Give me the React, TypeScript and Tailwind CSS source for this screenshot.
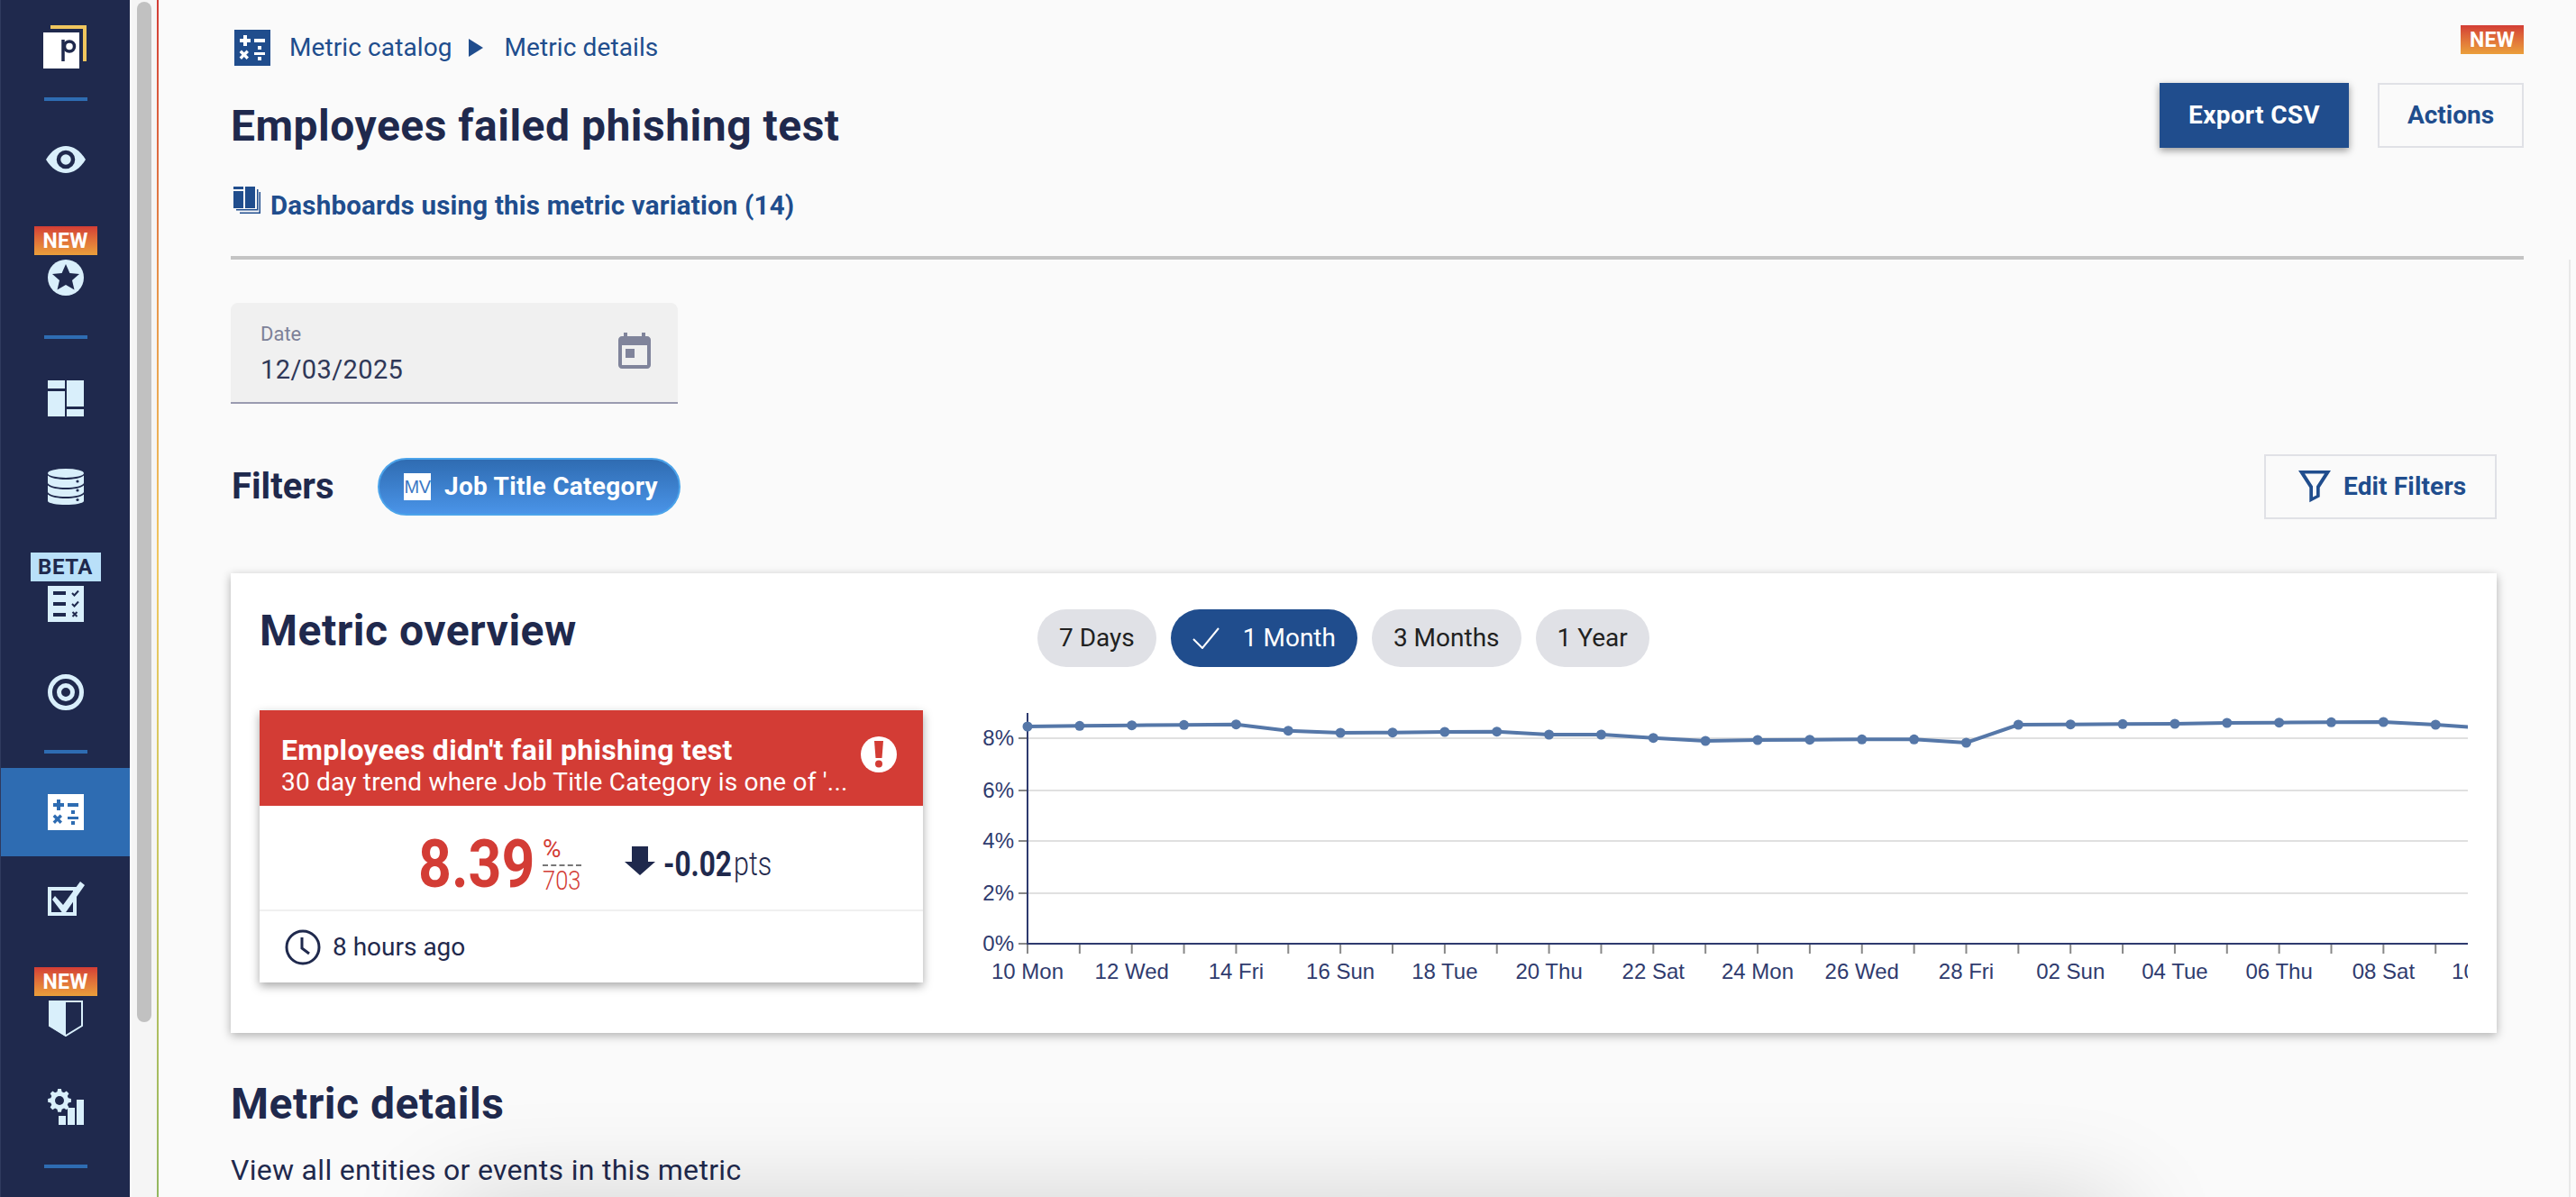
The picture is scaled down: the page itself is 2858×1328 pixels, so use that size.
const points = [
  806, 805.3, 804.7, 804.3, 803.7, 810.7, 813, 812.7, 812, 811.7, 815, 815, 818.7, 822, 821, 820.7, 820.3, 820.3, 824, 804,
  803.7, 803.3, 803, 802, 801.7, 801.3, 801, 804, 808,
];
const xLabels = [
  '10 Mon', '12 Wed', '14 Fri', '16 Sun', '18 Tue', '20 Thu', '22 Sat', '24 Mon', '26 Wed', '28 Fri', '02 Sun', '04 Tue',
  '06 Thu', '08 Sat', '10 Mon',
];
const yLabels = [
  { label: '8%', y: 819 },
  { label: '6%', y: 877 },
  { label: '4%', y: 933 },
  { label: '2%', y: 991 },
  { label: '0%', y: 1047 },
];

const light = '#d9effb';
const navy = '#1f294d';

function SideDivider({ className = '' }: { className?: string }) {
  return <div className={`mx-auto h-1 w-12 shrink-0 bg-[#2e6cb2] ${className}`} />;
}

function NewBadge({ className = '' }: { className?: string }) {
  return (
    <div
      className={`flex h-8 w-[70px] shrink-0 items-center justify-center bg-gradient-to-b from-[#d33c35] to-[#ea9f3b] text-[23px] leading-none font-bold tracking-[0.3px] text-white ${className}`}
    >
      NEW
    </div>
  );
}

function CalcIcon({ bg, fg }: { bg: string; fg: string }) {
  return (
    <svg width="40" height="40" viewBox="0 0 40 40" className="shrink-0">
      <rect width="40" height="40" fill={bg} />
      <g fill={fg}>
        <rect x="6" y="10" width="12" height="4" />
        <rect x="10" y="6" width="4" height="12" />
        <rect x="22" y="10" width="12" height="4" />
        <path d="M8 22.5l2.8 2.8 2.800-2.800 2.400 2.400-2.800 2.800 2.800 2.800-2.400 2.400-2.800-2.800-2.800 2.800-2.400-2.400 2.800-2.800-2.800-2.800z" />
        <rect x="22" y="25" width="12" height="3" />
        <rect x="26" y="18" width="4" height="4" />
        <rect x="26" y="30" width="4" height="4" />
      </g>
    </svg>
  );
}

function Sidebar() {
  return (
    <aside className="flex h-full w-[144px] shrink-0 flex-col items-center border-l border-[#2f3a5e] bg-[#1f294d]">
      <svg width="48" height="48" viewBox="0 0 48 48" className="mt-7 ml-[-1px] shrink-0">
        <path d="M8 0h40v40h-4V4H8z" fill="#f0c65e" />
        <rect x="0" y="8" width="40" height="40" fill="#fff" />
        <path d="M22 16v24" stroke={navy} strokeWidth="3.500" />
        <circle cx="29" cy="23.500" r="5.500" fill="none" stroke={navy} strokeWidth="3.500" />
      </svg>
      <SideDivider className="mt-8" />
      <svg width="44" height="30" viewBox="0 0 44 30" className="mt-[50px] shrink-0">
        <path d="M0 15C6 5 14 0 22 0s16 5 22 15c-6 10-14 15-22 15S6 25 0 15z" fill={light} />
        <circle cx="22" cy="15" r="8" fill="none" stroke={navy} strokeWidth="4.500" />
      </svg>
      <NewBadge className="mt-[59px]" />
      <svg width="40" height="40" viewBox="0 0 40 40" className="mt-[5px] shrink-0">
        <circle cx="20" cy="20" r="20" fill={light} />
        <path d="M20 5l4.400 10 10.600.9-8 7 2.500 10.600L20 27.900l-9.500 5.600L13 22.900l-8-7 10.600-.9z" fill={navy} />
      </svg>
      <SideDivider className="mt-11" />
      <svg width="40" height="40" viewBox="0 0 40 40" fill={light} className="mt-[46px] shrink-0">
        <rect x="0" y="0" width="19" height="9" />
        <rect x="0" y="12" width="19" height="28" />
        <rect x="21" y="0" width="19" height="29" />
        <rect x="21" y="32" width="19" height="8" />
      </svg>
      <svg width="40" height="40" viewBox="0 0 40 40" className="mt-[58px] shrink-0">
        <g fill={light}>
          <ellipse cx="20" cy="5" rx="20" ry="5" />
          <path d="M0 7.500c3 3 12 4.500 20 4.500s17-1.500 20-4.500V16c-1 3-10 5-20 5S1 19 0 16z" />
          <path d="M0 18.500c3 3 12 4.500 20 4.500s17-1.500 20-4.500V26c-1 3-10 5-20 5S1 29 0 26z" />
          <path d="M0 28.500c3 3 12 4.500 20 4.500s17-1.500 20-4.500V36c-1 2.500-10 4-20 4S1 38.500 0 36z" />
        </g>
        <g fill={navy}>
          <circle cx="33" cy="14" r="1.600" />
          <circle cx="33" cy="24" r="1.600" />
          <circle cx="33" cy="34.500" r="1.600" />
        </g>
      </svg>
      <div className="mt-[53px] flex h-8 w-[78px] shrink-0 items-center justify-center bg-[#b9e0f9] text-[24px] leading-none font-bold tracking-[0.5px] text-[#1f294d]">
        BETA
      </div>
      <svg width="40" height="40" viewBox="0 0 40 40" className="mt-[5px] shrink-0">
        <rect width="40" height="40" fill={light} />
        <g fill={navy}>
          <rect x="6" y="6" width="14" height="4" />
          <rect x="6" y="18" width="14" height="4" />
          <rect x="6" y="30" width="14" height="4" />
        </g>
        <g fill="none" stroke={navy} strokeWidth="2">
          <path d="M27 8l2.500 2.500 4.500-5" />
          <path d="M27 20l2.500 2.500 4.500-5" />
          <path d="M27.500 29l5 5m0-5l-5 5" />
        </g>
      </svg>
      <svg width="40" height="40" viewBox="0 0 40 40" fill="none" stroke={light} className="mt-[58px] shrink-0">
        <circle cx="20" cy="20" r="17.500" strokeWidth="5" />
        <circle cx="20" cy="20" r="7.500" strokeWidth="5" />
      </svg>
      <SideDivider className="mt-11" />
      <div className="mt-4 flex h-[98px] w-full shrink-0 items-center justify-center bg-[#2e6cb2]">
        <CalcIcon bg="#fff" fg="#2e6cb2" />
      </div>
      <svg width="42" height="40" viewBox="0 0 42 40" className="mt-[26px] ml-[3px] shrink-0">
        <rect x="2" y="10" width="28" height="28" fill="none" stroke={light} strokeWidth="4" />
        <path d="M8 18l9 10L36 2l5 4-23 33L5 22z" fill={light} />
      </svg>
      <NewBadge className="mt-[57px]" />
      <svg width="38" height="40" viewBox="0 0 38 40" className="mt-[5px] shrink-0">
        <path d="M1 1h36v27L19 39 1 28z" fill={navy} stroke={light} strokeWidth="2" />
        <path d="M0 0h19v40L0 28z" fill={light} />
      </svg>
      <svg width="40" height="40" viewBox="0 0 40 40" fill={light} className="mt-[58px] shrink-0">
        <path
          d="M10 0h4l.8 3.400 2.600 1.100 3-1.800 2.900 2.900-1.800 3 1.100 2.600L26 12v4l-3.400.8-1.100 2.600 1.800 3-2.900 2.900-3-1.800-2.600 1.100L14 28h-4l-.8-3.400-2.600-1.100-3 1.800-2.900-2.900 1.800-3-1.100-2.600L-2 16v-4l3.400-.8 1.100-2.600-1.800-3 2.900-2.900 3 1.800 2.600-1.100z"
          transform="translate(2 0) scale(.92)"
        />
        <circle cx="13" cy="13" r="5" fill={navy} />
        <rect x="12" y="30" width="8" height="10" />
        <rect x="22" y="21" width="8" height="19" />
        <rect x="32" y="12" width="8" height="28" />
      </svg>
      <SideDivider className="mt-11" />
    </aside>
  );
}

function Chart() {
  const step = 57.86;
  const line = points.map((y, i) => `${1140 + i * step},${y}`).join(' ');
  const ticks = Array.from({ length: 29 }, (_, i) => 1140 + i * step);
  return (
    <svg width="1678" height="320" viewBox="1060 788 1678 320" className="shrink-0 font-['Liberation_Sans',sans-serif]">
      {yLabels.map((t) => (
        <g key={t.label}>
          {t.y !== 1047 && <line x1="1140" x2="2738" y1={t.y} y2={t.y} stroke="#e0e0e0" strokeWidth="2" />}
          <line x1="1130" x2="1140" y1={t.y} y2={t.y} stroke="#888" strokeWidth="2" />
          <text x="1125" y={t.y + 8} textAnchor="end" fontSize="24" fill="#2f3b6e">
            {t.label}
          </text>
        </g>
      ))}
      {ticks.map((x) => (
        <line key={x} x1={x} x2={x} y1="1047" y2="1058" stroke="#888" strokeWidth="2" />
      ))}
      {xLabels.map((label, i) => (
        <text key={i} x={1140 + i * 2 * step} y="1086" textAnchor="middle" fontSize="24" fill="#2f3b6e">
          {label}
        </text>
      ))}
      <line x1="1140" x2="1140" y1="791" y2="1048" stroke="#2e3a6e" strokeWidth="2" />
      <line x1="1140" x2="2738" y1="1047" y2="1047" stroke="#2e3a6e" strokeWidth="2" />
      <polyline points={line} fill="none" stroke="#5577a8" strokeWidth="4" />
      {points.map((y, i) => (
        <circle key={i} cx={1140 + i * step} cy={y} r="5.500" fill="#5577a8" />
      ))}
    </svg>
  );
}

function AlertCard() {
  return (
    <div className="flex h-[302px] w-[736px] shrink-0 flex-col bg-white shadow-[0_4px_10px_rgba(0,0,0,0.35)]">
      <div className="flex h-[106px] shrink-0 items-start justify-between bg-[#d33c35] pt-6 pr-[29px] pl-6 text-white">
        <div>
          <div className="text-[32px] leading-10 font-bold tracking-[0.3px]">Employees didn't fail phishing test</div>
          <div className="text-[28px] leading-8 tracking-[0.2px]">30 day trend where Job Title Category is one of '...</div>
        </div>
        <div className="mt-[5px] flex h-10 w-10 shrink-0 items-center justify-center rounded-full bg-white">
          <svg width="10" height="30" viewBox="0 0 10 30" fill="#d33c35">
            <path d="M0 0h10l-1.500 19h-7z" />
            <circle cx="5" cy="25.500" r="4" />
          </svg>
        </div>
      </div>
      <div className="flex h-[115px] shrink-0 items-center pt-[14px] pl-[176px]">
        <div className="h-[86px] w-[138px] shrink-0 origin-left scale-x-[0.87] text-[74px] leading-[86px] font-bold text-[#d33c35]">
          8.39
        </div>
        <div className="flex w-[43px] shrink-0 flex-col text-[#d33c35]">
          <div className="text-[28px] leading-[34px]">%</div>
          <div className="border-t-2 border-dashed border-[#777]" />
          <div className="h-[32px] origin-left scale-x-[0.85] text-[30px] leading-[32px] font-light">703</div>
        </div>
        <svg width="34" height="32" viewBox="0 0 34 32" fill={navy} className="mt-[-8px] ml-12 shrink-0">
          <path d="M8 0h18v17h8L17 32 0 17h8z" />
        </svg>
        <div className="ml-[9px] w-[78px] shrink-0 origin-left scale-x-[0.83] text-[38px] leading-10 font-bold whitespace-nowrap text-[#1f294d]">
          -0.02
        </div>
        <div className="w-[44px] shrink-0 origin-left scale-x-[0.85] text-[36px] leading-10 font-light text-[#1f294d]">
          pts
        </div>
      </div>
      <div className="flex flex-1 items-center gap-[13px] border-t-2 border-[#f0f0f0] pl-7">
        <svg width="40" height="40" viewBox="0 0 40 40" fill="none" stroke={navy} strokeWidth="3" className="shrink-0">
          <circle cx="20" cy="20" r="18" />
          <path d="M19 9v12l8 6" />
        </svg>
        <span className="text-[28px] text-[#1f294d]">8 hours ago</span>
      </div>
    </div>
  );
}

function Chip({ label, active }: { label: string; active?: boolean }) {
  if (active) {
    return (
      <div className="flex h-16 items-center gap-[26px] rounded-[32px] bg-[#204d8d] pr-6 pl-6 text-[28px] text-white">
        <svg width="30" height="24" viewBox="0 0 30 24" fill="none" stroke="#fff" strokeWidth="2">
          <path d="M1 13l10 10L29 1" />
        </svg>
        {label}
      </div>
    );
  }
  return <div className="flex h-16 items-center rounded-[32px] bg-[#e0e1e6] px-6 text-[28px] text-[#212121]">{label}</div>;
}

export default function App() {
  return (
    <div className="relative flex h-[1328px] w-[2858px] overflow-hidden bg-[#fafafa] font-['Roboto',sans-serif] text-[#1f294d]">
      <Sidebar />
      <div className="h-full w-[30px] shrink-0 border-l-2 border-[#fafafa] bg-[#f5f5f5] pt-[2px] pl-[6px]">
        <div className="h-[1132px] w-4 rounded-full bg-[#c1c1c1]" />
      </div>
      <div className="h-full w-[2px] shrink-0 bg-[linear-gradient(to_bottom,#d33c35_0%,#e8964a_25%,#f1c75f_47%,#d0c860_68%,#93b75f_100%)]" />

      <main className="flex min-w-0 flex-1 flex-col pl-20">
        <header className="mr-[58px] shrink-0 border-b-4 border-[#c4c4c4]">
          <div className="flex h-[284px] justify-between">
            <div>
              <div className="mt-[33px] flex h-10 items-center pl-1 text-[28px] tracking-[0.1px] text-[#204d8d]">
                <CalcIcon bg="#204d8d" fg="#fff" />
                <span className="ml-[21px]">Metric catalog</span>
                <svg width="16" height="20" viewBox="0 0 16 20" fill="#204d8d" className="mr-6 ml-[18px]">
                  <path d="M0 0l16 10L0 20z" />
                </svg>
                <span>Metric details</span>
              </div>
              <h1 className="mt-[39px] text-[48px] leading-[56px] font-bold tracking-[0.5px]">Employees failed phishing test</h1>
              <div className="mt-[42px] flex items-center pl-[3px] text-[29.5px] leading-9 font-bold tracking-[0.2px] text-[#204d8d]">
                <svg width="30" height="30" viewBox="0 0 30 30" fill="#204d8d" className="mt-[-12px] shrink-0">
                  <rect x="0" y="0" width="11" height="3" />
                  <rect x="13" y="0" width="11" height="24" />
                  <rect x="0" y="5" width="11" height="19" />
                  <path d="M26 3h1.500v23.500H3V25h23zM28.500 6H30v24H7v-1.500h21.500z" />
                </svg>
                <span className="ml-[11px]">Dashboards using this metric variation (14)</span>
              </div>
            </div>
            <div className="flex flex-col items-end">
              <NewBadge className="mt-7" />
              <div className="mt-8 flex gap-8">
                <button className="flex h-[72px] w-[210px] items-center justify-center bg-[#204d8d] text-[28px] font-bold tracking-[0.3px] text-white shadow-[0_3px_8px_rgba(0,0,0,0.4)]">
                  Export CSV
                </button>
                <button className="flex h-[72px] w-[162px] items-center justify-center border-2 border-[#e0e1e6] text-[28px] font-bold text-[#204d8d]">
                  Actions
                </button>
              </div>
            </div>
          </div>
        </header>

        <section className="mr-[6px] flex-1 border-r-2 border-[#e8e8e8] pr-20">
          <div className="mt-12 flex h-28 w-[496px] items-center justify-between rounded-t-lg border-b-2 border-[#9a9bb0] bg-[#f0f0f0] pr-6 pl-[33px]">
            <div>
              <div className="text-[22px] leading-7 text-[#7d8198]">Date</div>
              <div className="mt-[9px] text-[29px] leading-8 tracking-[0.4px] text-[#2f3858]">12/03/2025</div>
            </div>
            <svg width="48" height="48" viewBox="0 0 24 24" fill="#80849b">
              <path d="M19 3h-1V1h-2v2H8V1H6v2H5c-1.110 0-1.990.9-1.990 2L3 19c0 1.100.89 2 2 2h14c1.100 0 2-.9 2-2V5c0-1.100-.9-2-2-2zm0 16H5V8h14v11zM7 10h5v5H7z" />
            </svg>
          </div>

          <div className="mt-14 flex h-[72px] items-center">
            <div className="w-[163px] pl-px text-[40px] font-bold">Filters</div>
            <div className="flex h-16 w-[336px] items-center gap-[15px] rounded-full border-2 border-[#4ba3ea] bg-gradient-to-b from-[#2f6cb2] to-[#4a94e8] pl-[27px] text-[28px] font-bold tracking-[0.3px] text-white">
              <span className="flex h-[30px] w-[30px] shrink-0 items-center justify-center bg-white font-['Liberation_Sans',sans-serif] text-[20px] font-normal tracking-[-0.5px] text-[#3b78c4]">
                MV
              </span>
              Job Title Category
            </div>
            <button className="ml-auto flex h-[72px] w-[258px] items-center gap-[14px] border-2 border-[#e0e1e6] pl-9 text-[28px] font-bold tracking-[0.15px] text-[#204d8d]">
              <svg width="36" height="36" viewBox="0 0 36 36" fill="#204d8d" fillRule="evenodd">
                <path d="M0 0h36L23.700 19v10.300L12.300 35.300V19zM7 3.500l9 14v12l4-2.100V17.500l9-14z" />
              </svg>
              Edit Filters
            </button>
          </div>

          <div className="mt-[60px] h-[510px] bg-white px-8 pt-10 shadow-[0_3px_10px_rgba(0,0,0,0.3)]">
            <div className="flex h-16 items-start">
              <h2 className="w-[863px] shrink-0 text-[48px] leading-[48px] font-bold tracking-[0.5px]">Metric overview</h2>
              <div className="flex gap-4">
                <Chip label="7 Days" />
                <Chip label="1 Month" active />
                <Chip label="3 Months" />
                <Chip label="1 Year" />
              </div>
            </div>
            <div className="mt-12 flex gap-9">
              <AlertCard />
              <Chart />
            </div>
          </div>

          <h2 className="mt-[51px] text-[48px] leading-[56px] font-bold tracking-[0.5px]">Metric details</h2>
          <p className="mt-[25px] text-[32px] leading-10 tracking-[0.3px]">View all entities or events in this metric</p>
        </section>
      </main>

      {/* shadow of the panel just below the fold */}
      <div className="absolute top-[1340px] left-[500px] h-[100px] w-[1850px] shadow-[0_0_120px_rgba(0,0,0,0.2)]" />
    </div>
  );
}
